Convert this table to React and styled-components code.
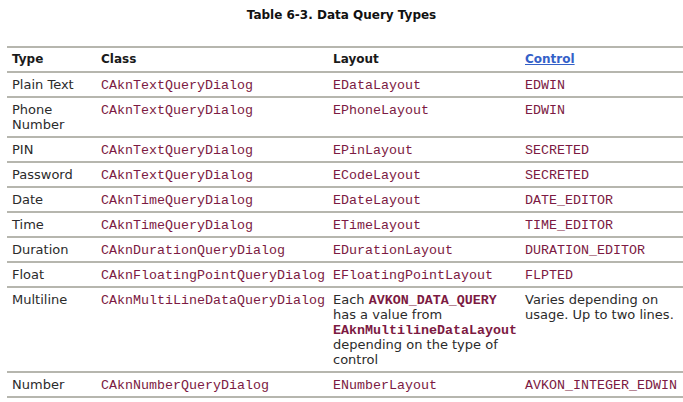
import React from "react";
import styled, { createGlobalStyle } from "styled-components";

const GlobalStyle = createGlobalStyle`
  body {
    margin: 0;
    background: #ffffff;
    font-family: "DejaVu Sans", Verdana, sans-serif;
    color: #2b2b2b;
  }
`;

const Wrapper = styled.div`
  width: 683px;
  overflow: hidden;
`;

const Title = styled.h3`
  margin: 0;
  height: 46px;
  padding-top: 8px;
  box-sizing: border-box;
  text-align: center;
  font-size: 12px;
  font-weight: bold;
  color: #111111;
`;

const Table = styled.div`
  margin-left: 7px;
  border-top: 2px solid #b6b6ae;
`;

const Row = styled.div`
  display: grid;
  grid-template-columns: 89px 232px 192px 1fr;
  border-bottom: 2px solid #b6b6ae;
`;

const Cell = styled.div`
  padding: 4px 4px 4px 5px;
  font-size: ${({ $head }) => ($head ? "12px" : "13px")};
  line-height: 15px;
  font-weight: ${({ $head }) => ($head ? "bold" : "normal")};
  color: ${({ $head }) => ($head ? "#1a1a1a" : "#2b2b2b")};
`;

const Code = styled.span`
  font-family: "Liberation Mono", "Courier New", monospace;
  font-size: 13.33px;
  line-height: 11px;
  color: #7c1a42;
  font-weight: ${({ $strong }) => ($strong ? "bold" : "normal")};
  white-space: nowrap;
`;

const HeadLink = styled.a`
  color: #3461c8;
  text-decoration: underline;
`;

const rows = [
  ["Plain Text", "CAknTextQueryDialog", "EDataLayout", "EDWIN"],
  ["Phone Number", "CAknTextQueryDialog", "EPhoneLayout", "EDWIN"],
  ["PIN", "CAknTextQueryDialog", "EPinLayout", "SECRETED"],
  ["Password", "CAknTextQueryDialog", "ECodeLayout", "SECRETED"],
  ["Date", "CAknTimeQueryDialog", "EDateLayout", "DATE_EDITOR"],
  ["Time", "CAknTimeQueryDialog", "ETimeLayout", "TIME_EDITOR"],
  ["Duration", "CAknDurationQueryDialog", "EDurationLayout", "DURATION_EDITOR"],
  ["Float", "CAknFloatingPointQueryDialog", "EFloatingPointLayout", "FLPTED"],
];

export default function App() {
  return (
    <Wrapper>
      <GlobalStyle />
      <Title>Table 6-3. Data Query Types</Title>
      <Table>
        <Row>
          <Cell $head>Type</Cell>
          <Cell $head>Class</Cell>
          <Cell $head>Layout</Cell>
          <Cell $head>
            <HeadLink href="#control">Control</HeadLink>
          </Cell>
        </Row>
        {rows.map(([type, cls, layout, control]) => (
          <Row key={type}>
            <Cell>{type}</Cell>
            <Cell>
              <Code>{cls}</Code>
            </Cell>
            <Cell>
              <Code>{layout}</Code>
            </Cell>
            <Cell>
              <Code>{control}</Code>
            </Cell>
          </Row>
        ))}
        <Row>
          <Cell>Multiline</Cell>
          <Cell>
            <Code>CAknMultiLineDataQueryDialog</Code>
          </Cell>
          <Cell>
            Each <Code $strong>AVKON_DATA_QUERY</Code> has a value from{" "}
            <Code $strong>EAknMultilineDataLayout</Code> depending on the type
            of control
          </Cell>
          <Cell>Varies depending on usage. Up to two lines.</Cell>
        </Row>
        <Row>
          <Cell>Number</Cell>
          <Cell>
            <Code>CAknNumberQueryDialog</Code>
          </Cell>
          <Cell>
            <Code>ENumberLayout</Code>
          </Cell>
          <Cell>
            <Code>AVKON_INTEGER_EDWIN</Code>
          </Cell>
        </Row>
      </Table>
    </Wrapper>
  );
}
